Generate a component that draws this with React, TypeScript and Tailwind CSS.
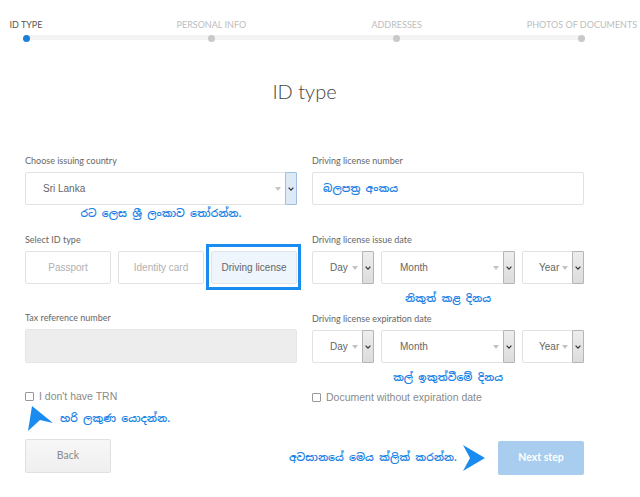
import React from "react";

const steps = ["ID TYPE", "PERSONAL INFO", "ADDRESSES", "PHOTOS OF DOCUMENTS"];

interface SelectProps {
  value: string;
  width: string;
  pad: string;
  tone?: "blue" | "gray";
}

const FakeSelect: React.FC<SelectProps> = ({ value, width, pad, tone = "gray" }) => {
  const box =
    tone === "blue"
      ? "border-[#9fbfe0] bg-[#dde9f6]"
      : "border-[#b5b5b5] bg-gradient-to-b from-[#ededed] to-[#dcdcdc]";
  return (
    <div className={`flex h-[33px] items-stretch rounded-[2px] border border-[#e2e2e2] bg-white ${width}`}>
      <div className={`flex flex-1 items-center text-[10px] text-[#666] font-['Liberation_Sans',Arial,sans-serif] ${pad}`}>
        {value}
      </div>
      <div className="mr-[4px] flex items-center">
        <span className="h-0 w-0 border-x-[3px] border-t-[4px] border-x-transparent border-t-[#c4c4c4]" />
      </div>
      <div className={`-my-px -mr-px flex w-[12px] items-center justify-center rounded-[1px] border ${box}`}>
        <svg width="6" height="4" viewBox="0 0 6 4">
          <path d="M0.6 0.7 L3 3.1 L5.4 0.7" fill="none" stroke="#333" strokeWidth="1.2" />
        </svg>
      </div>
    </div>
  );
};

const Label: React.FC<{ children: React.ReactNode }> = ({ children }) => (
  <div className="mb-[5px] h-[12px] text-[9px] leading-[12px] text-[#666] font-['Lato',sans-serif]">
    {children}
  </div>
);

const sinhala = "font-semibold text-[#1a82e6] font-['Noto_Sans_Sinhala','Noto_Sans',sans-serif] whitespace-nowrap";

const Note: React.FC<{ children: React.ReactNode; className?: string }> = ({ children, className = "" }) => (
  <div className={`h-[29px] text-center text-[10.5px] leading-[16px] ${sinhala} ${className}`}>{children}</div>
);

const DateRow: React.FC = () => (
  <div className="flex gap-[7px]">
    <FakeSelect value="Day" width="w-[62px]" pad="pl-[17px]" />
    <FakeSelect value="Month" width="w-[134px]" pad="pl-[18px]" />
    <FakeSelect value="Year" width="w-[62px]" pad="pl-[16px]" />
  </div>
);

export default function App() {
  return (
    <div className="h-[497px] w-[640px] overflow-hidden bg-white font-['Lato',sans-serif]">
      {/* stepper */}
      <div className="relative ml-[26px] mt-[19px] w-[556px]">
        <div className="absolute left-0 right-0 top-[16px] h-[5px] bg-[#f3f3f3]" />
        <div className="relative flex justify-between">
          {steps.map((s, i) => (
            <div key={s} className="flex w-0 flex-col items-center">
              <div
                className={`whitespace-nowrap text-[9px] leading-[12px] ${i === 0 ? "text-[#555]" : "text-[#bdbdbd]"}`}
              >
                {s}
              </div>
              <div
                className={`mt-[4px] h-[7px] w-[7px] rounded-full ${i === 0 ? "bg-[#1b80d8]" : "bg-[#c9c9c9]"}`}
              />
            </div>
          ))}
        </div>
      </div>

      <h1 className="mt-[35px] ml-[25px] w-[559px] text-center text-[20px] font-light leading-[28px] text-[#444]">
        ID type
      </h1>

      <div className="ml-[25px] mt-[50px] grid w-[559px] grid-cols-2 gap-x-[15px]">
        {/* left column */}
        <div>
          <Label>Choose issuing country</Label>
          <FakeSelect value="Sri Lanka" width="w-full" pad="pl-[17px]" tone="blue" />
          <Note>රට ලෙස ශ්‍රී ලංකාව තෝරන්න.</Note>

          <Label>Select ID type</Label>
          <div className="flex gap-[7px] font-['Liberation_Sans',Arial,sans-serif] text-[10px]">
            <div className="flex h-[33px] w-[86px] items-center justify-center rounded-[2px] border border-[#e2e2e2] text-[#b0b0b0]">
              Passport
            </div>
            <div className="flex h-[33px] w-[86px] items-center justify-center rounded-[2px] border border-[#e2e2e2] text-[#b0b0b0]">
              Identity card
            </div>
            <div className="relative flex h-[33px] w-[86px] items-center justify-center rounded-[2px] border border-[#dfe6ee] bg-[#eef5fc] text-[#666]">
              Driving license
              <div className="absolute -left-[6px] -right-[5px] -top-[8px] -bottom-[7px] border-[3px] border-[#1a8cf0]" />
            </div>
          </div>
          <div className="h-[28px]" />

          <Label>Tax reference number</Label>
          <div className="h-[34px] rounded-[2px] border border-[#e6e6e6] bg-[#ededed]" />

          <div className="mt-[26px] flex items-center gap-[5px]">
            <span className="h-[9px] w-[9px] rounded-[1px] border border-[#999] bg-white" />
            <span className="text-[10.5px] text-[#8a8a8a] font-['Liberation_Sans',Arial,sans-serif]">
              I don't have TRN
            </span>
          </div>

          <div className="mt-0 flex items-center">
            <svg width="28" height="27" viewBox="0 0 28 27" className="ml-[1px]">
              <polygon points="6,1 27,18 14,15 2,26" fill="#1a8cf0" />
            </svg>
            <span className={`ml-[6px] mt-[2px] text-[10.5px] ${sinhala}`}>හරි ලකුණ යොදන්න.</span>
          </div>

          <div className="mt-[7px] flex h-[34px] w-[86px] items-center justify-center rounded-[2px] border border-[#e0e0e0] bg-gradient-to-b from-[#f7f7f7] to-[#efefef] text-[10.5px] text-[#8a8a8a]">
            Back
          </div>
        </div>

        {/* right column */}
        <div>
          <Label>Driving license number</Label>
          <div className={`flex h-[33px] items-center rounded-[2px] border border-[#e2e2e2] pl-[10px] text-[10.5px] ${sinhala}`}>
            බලපත්‍ර අංකය
          </div>
          <div className="h-[29px]" />

          <Label>Driving license issue date</Label>
          <DateRow />
          <Note className="pt-[6px]">නිකුත් කළ දිනය</Note>

          <Label>Driving license expiration date</Label>
          <DateRow />
          <Note className="pt-[6px]">කල් ඉකුත්වීමේ දිනය</Note>

          <div className="-mt-[2px] flex items-center gap-[5px]">
            <span className="h-[9px] w-[9px] rounded-[1px] border border-[#999] bg-white" />
            <span className="text-[10.5px] text-[#8a8a8a] font-['Liberation_Sans',Arial,sans-serif]">
              Document without expiration date
            </span>
          </div>

          <div className="mt-[35px] flex items-center justify-end">
            <span className={`text-[10.5px] ${sinhala}`}>අවසානයේ මෙය ක්ලික් කරන්න.</span>
            <svg width="24" height="28" viewBox="0 0 24 28" className="ml-[5px] mr-[12px] shrink-0">
              <polygon points="1,1 23,14 1,27 8,14" fill="#1a8cf0" />
            </svg>
            <div className="flex h-[34px] w-[86px] shrink-0 items-center justify-center rounded-[2px] bg-[#a8cdef] text-[10.5px] font-bold text-white">
              Next step
            </div>
          </div>
        </div>
      </div>
    </div>
  );
}
